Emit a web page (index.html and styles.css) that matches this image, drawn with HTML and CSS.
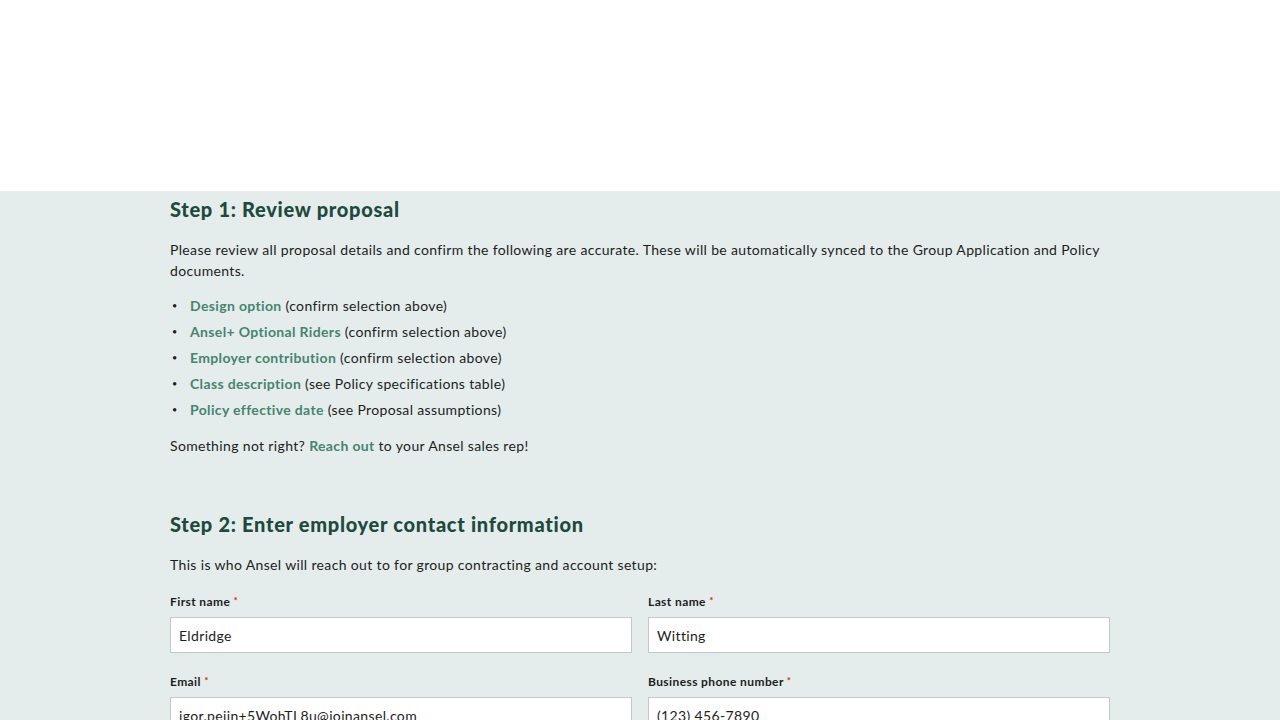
FILE: index.html
```html
<!DOCTYPE html>
<html>
<head>
<meta charset="utf-8">
<link rel="stylesheet" href="styles.css">
</head>
<body>
<header class="top"></header>
<main class="page">
  <section class="content">
    <h2 class="step-title">Step 1: Review proposal</h2>
    <p class="text intro">Please review all proposal details and confirm the following are accurate. These will be automatically synced to the Group Application and Policy documents.</p>
    <ul class="list">
      <li><span class="hl">Design option</span> (confirm selection above)</li>
      <li><span class="hl">Ansel+ Optional Riders</span> (confirm selection above)</li>
      <li><span class="hl">Employer contribution</span> (confirm selection above)</li>
      <li><span class="hl">Class description</span> (see Policy specifications table)</li>
      <li><span class="hl">Policy effective date</span> (see Proposal assumptions)</li>
    </ul>
    <p class="text">Something not right? <a class="hl link" href="#">Reach out</a> to your Ansel sales rep!</p>

    <h2 class="step-title step2">Step 2: Enter employer contact information</h2>
    <p class="text">This is who Ansel will reach out to for group contracting and account setup:</p>
    <div class="form">
      <div class="field">
        <label class="label">First name <span class="req">*</span></label>
        <input class="input" type="text" value="Eldridge">
      </div>
      <div class="field">
        <label class="label">Last name <span class="req">*</span></label>
        <input class="input" type="text" value="Witting">
      </div>
      <div class="field">
        <label class="label">Email <span class="req">*</span></label>
        <input class="input" type="text" value="igor.pejin+5WohTL8u@joinansel.com">
      </div>
      <div class="field">
        <label class="label">Business phone number <span class="req">*</span></label>
        <input class="input" type="text" value="(123) 456-7890">
      </div>
    </div>
  </section>
</main>
</body>
</html>
```

FILE: styles.css
```css
html, body {
  margin: 0;
  padding: 0;
}
body {
  background: #e4edeb;
  font-family: "Lato", "Open Sans", sans-serif;
  color: #1d1d1d;
  overflow: hidden;
  height: 720px;
}
.top {
  height: 191px;
  background: #ffffff;
}
.page {
  display: flex;
  justify-content: center;
}
.content {
  width: 940px;
  padding-top: 6px;
}
.step-title {
  font-family: "Lato", sans-serif;
  font-weight: 900;
  font-size: 20px;
  line-height: 24px;
  color: #1e4a3d;
  margin: 0 0 18px 0;
  letter-spacing: 0.7px;
}
.step2 {
  margin-top: 56px;
}
.text {
  font-size: 14px;
  line-height: 21px;
  margin: 0 0 14px 0;
  letter-spacing: 0.35px;
}
.intro {
  margin-bottom: 14px;
}
.list {
  list-style: none;
  margin: 0 0 15px 0;
  padding: 0;
  font-size: 14px;
  line-height: 21px;
  letter-spacing: 0.35px;
}
.list li {
  margin-bottom: 5px;
}
.list li::before {
  content: "•";
  display: inline-block;
  width: 20px;
  padding-left: 2px;
  box-sizing: border-box;
  font-size: 9px;
  line-height: 21px;
  vertical-align: top;
}
.hl {
  color: #468470;
  font-weight: 700;
}
.link {
  text-decoration: none;
}
.form {
  display: grid;
  grid-template-columns: 1fr 1fr;
  column-gap: 16px;
  row-gap: 22px;
  margin-top: 20px;
}
.field {
  display: flex;
  flex-direction: column;
}
.label {
  font-size: 12px;
  font-weight: 700;
  line-height: 14px;
  margin-bottom: 8px;
  color: #1d1d1d;
  letter-spacing: 0.4px;
}
.req {
  color: #e0201e;
  font-size: 10px;
  line-height: 10px;
  vertical-align: 2px;
}
.input {
  height: 36px;
  box-sizing: border-box;
  border: 1px solid #c4c7c6;
  background: #ffffff;
  font-family: "Lato", sans-serif;
  font-size: 14px;
  padding: 0 8px;
  color: #1d1d1d;
  outline: none;
  border-radius: 0;
  letter-spacing: 0.35px;
}
```
